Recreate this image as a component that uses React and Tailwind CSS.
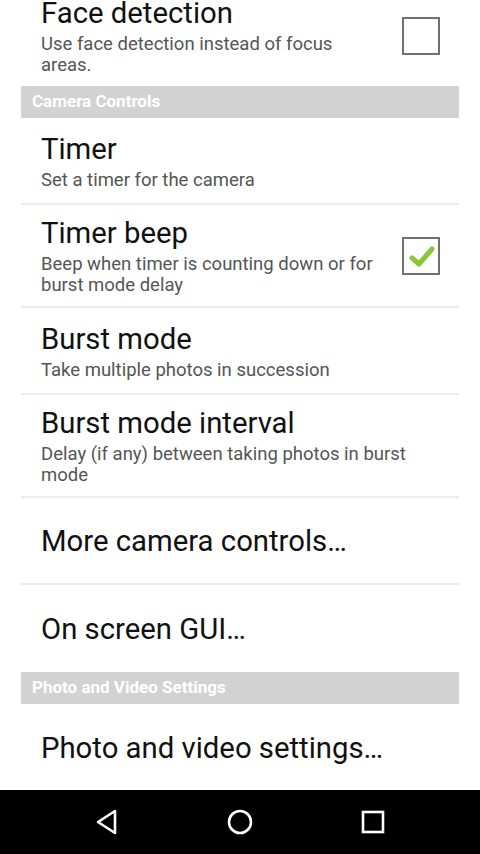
import React from 'react';

const CheckBox = ({ checked }) => (
  <div className="relative w-[38px] h-[38px] border-2 border-[#707070] shrink-0">
    {checked && (
      <svg className="absolute left-[4px] top-[5px]" width="28" height="26" viewBox="0 0 28 26">
        <path d="M4 14 L11 20 L24 5" fill="none" stroke="#86c93a" strokeWidth="5" strokeLinecap="round" strokeLinejoin="round" />
      </svg>
    )}
  </div>
);

const Pref = ({ title, summary, checkbox, checked, divider = true }) => (
  <div className={`mx-[21px] flex items-center min-h-[87px] py-[10px] ${divider ? 'border-b-2 border-[#ececec]' : ''}`}>
    <div className="flex-1 pl-[20px] pr-[16px]">
      <div className="text-[29.3px] leading-[36px] text-[#111]">{title}</div>
      {summary && (
        <div className="mt-[3px] text-[18.5px] leading-[21px] text-[#555]">{summary}</div>
      )}
    </div>
    {checkbox && (
      <div className="pr-[19px]">
        <CheckBox checked={checked} />
      </div>
    )}
  </div>
);

const Header = ({ label }) => (
  <div className="mx-[21px] h-[32px] bg-[#d2d2d2] flex items-center pl-[11px] text-[17px] font-bold text-white">
    {label}
  </div>
);

export default function App() {
  return (
    <div className="w-[480px] h-[854px] bg-white overflow-hidden flex flex-col" style={{ fontFamily: 'Roboto, "Noto Sans", sans-serif' }}>
      <div className="flex-1 overflow-hidden">
        <div className="-mt-[15px]">
          <Pref title="Face detection" summary="Use face detection instead of focus areas." checkbox divider={false} />
          <Header label="Camera Controls" />
          <Pref title="Timer" summary="Set a timer for the camera" />
          <Pref title="Timer beep" summary="Beep when timer is counting down or for burst mode delay" checkbox checked />
          <Pref title="Burst mode" summary="Take multiple photos in succession" />
          <Pref title="Burst mode interval" summary="Delay (if any) between taking photos in burst mode" />
          <Pref title="More camera controls…" />
          <Pref title="On screen GUI…" divider={false} />
          <Header label="Photo and Video Settings" />
          <Pref title="Photo and video settings…" divider={false} />
        </div>
      </div>
      <div className="h-[64px] bg-black flex items-center justify-center gap-[105px] shrink-0">
        <div className="w-[28px] flex justify-center">
          <svg width="26" height="28" viewBox="0 0 26 28">
            <path d="M21 3 L21 25 L4 14 Z" fill="none" stroke="white" strokeWidth="2.6" strokeLinejoin="round" />
          </svg>
        </div>
        <div className="w-[28px] flex justify-center">
          <svg width="28" height="28" viewBox="0 0 28 28">
            <circle cx="14" cy="14" r="11" fill="none" stroke="white" strokeWidth="2.6" />
          </svg>
        </div>
        <div className="w-[28px] flex justify-center">
          <svg width="26" height="26" viewBox="0 0 26 26">
            <rect x="3" y="3" width="20" height="20" fill="none" stroke="white" strokeWidth="2.6" />
          </svg>
        </div>
      </div>
    </div>
  );
}
